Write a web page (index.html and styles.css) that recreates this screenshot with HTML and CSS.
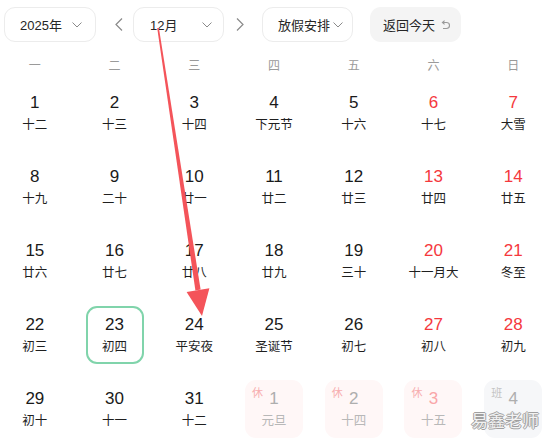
FILE: index.html
```html
<!DOCTYPE html>
<html lang="zh-CN">
<head>
<meta charset="utf-8">
<link rel="stylesheet" href="styles.css">
</head>
<body>
<div class="page">
  <div class="toolbar">
    <div class="select sel-year"><span>2025年</span><svg class="chev" width="10" height="6" viewBox="0 0 10 6"><path d="M0.5 0.5 L5 5 L9.5 0.5" fill="none" stroke="#8a8a8a" stroke-width="1"/></svg></div>
    <div class="nav nav-prev"><svg width="8" height="13" viewBox="0 0 8 13"><path d="M7 0.5 L1 6.5 L7 12.5" fill="none" stroke="#8a8a8a" stroke-width="1.2"/></svg></div>
    <div class="select sel-month"><span>12月</span><svg class="chev" width="10" height="6" viewBox="0 0 10 6"><path d="M0.5 0.5 L5 5 L9.5 0.5" fill="none" stroke="#8a8a8a" stroke-width="1"/></svg></div>
    <div class="nav nav-next"><svg width="8" height="13" viewBox="0 0 8 13"><path d="M1 0.5 L7 6.5 L1 12.5" fill="none" stroke="#8a8a8a" stroke-width="1.2"/></svg></div>
    <div class="select sel-holiday"><span>放假安排</span><svg class="chev" width="10" height="6" viewBox="0 0 10 6"><path d="M0.5 0.5 L5 5 L9.5 0.5" fill="none" stroke="#8a8a8a" stroke-width="1"/></svg></div>
    <div class="today-btn"><span>返回今天</span><svg class="undo" width="9" height="10" viewBox="0 0 9 10"><path d="M2 2.5 H5.5 A3 3 0 0 1 5.5 8.5 H2" fill="none" stroke="#9a9a9a" stroke-width="1.1"/><path d="M3.6 0.6 L1.4 2.5 L3.6 4.4" fill="none" stroke="#9a9a9a" stroke-width="1.1"/></svg></div>
  </div>

  <div class="calendar">
    <div class="week">
      <div>一</div><div>二</div><div>三</div><div>四</div><div>五</div><div>六</div><div>日</div>
    </div>
    <div class="grid">
      <div class="cell"><div class="day"><div class="num">1</div><div class="lunar">十二</div></div></div>
      <div class="cell"><div class="day"><div class="num">2</div><div class="lunar">十三</div></div></div>
      <div class="cell"><div class="day"><div class="num">3</div><div class="lunar">十四</div></div></div>
      <div class="cell"><div class="day"><div class="num">4</div><div class="lunar">下元节</div></div></div>
      <div class="cell"><div class="day"><div class="num">5</div><div class="lunar">十六</div></div></div>
      <div class="cell"><div class="day weekend"><div class="num">6</div><div class="lunar">十七</div></div></div>
      <div class="cell"><div class="day weekend"><div class="num">7</div><div class="lunar">大雪</div></div></div>

      <div class="cell"><div class="day"><div class="num">8</div><div class="lunar">十九</div></div></div>
      <div class="cell"><div class="day"><div class="num">9</div><div class="lunar">二十</div></div></div>
      <div class="cell"><div class="day"><div class="num">10</div><div class="lunar">廿一</div></div></div>
      <div class="cell"><div class="day"><div class="num">11</div><div class="lunar">廿二</div></div></div>
      <div class="cell"><div class="day"><div class="num">12</div><div class="lunar">廿三</div></div></div>
      <div class="cell"><div class="day weekend"><div class="num">13</div><div class="lunar">廿四</div></div></div>
      <div class="cell"><div class="day weekend"><div class="num">14</div><div class="lunar">廿五</div></div></div>

      <div class="cell"><div class="day"><div class="num">15</div><div class="lunar">廿六</div></div></div>
      <div class="cell"><div class="day"><div class="num">16</div><div class="lunar">廿七</div></div></div>
      <div class="cell"><div class="day"><div class="num">17</div><div class="lunar">廿八</div></div></div>
      <div class="cell"><div class="day"><div class="num">18</div><div class="lunar">廿九</div></div></div>
      <div class="cell"><div class="day"><div class="num">19</div><div class="lunar">三十</div></div></div>
      <div class="cell"><div class="day weekend"><div class="num">20</div><div class="lunar">十一月大</div></div></div>
      <div class="cell"><div class="day weekend"><div class="num">21</div><div class="lunar">冬至</div></div></div>

      <div class="cell"><div class="day"><div class="num">22</div><div class="lunar">初三</div></div></div>
      <div class="cell"><div class="day selected"><div class="num">23</div><div class="lunar">初四</div></div></div>
      <div class="cell"><div class="day"><div class="num">24</div><div class="lunar">平安夜</div></div></div>
      <div class="cell"><div class="day"><div class="num">25</div><div class="lunar">圣诞节</div></div></div>
      <div class="cell"><div class="day"><div class="num">26</div><div class="lunar">初七</div></div></div>
      <div class="cell"><div class="day weekend"><div class="num">27</div><div class="lunar">初八</div></div></div>
      <div class="cell"><div class="day weekend"><div class="num">28</div><div class="lunar">初九</div></div></div>

      <div class="cell"><div class="day"><div class="num">29</div><div class="lunar">初十</div></div></div>
      <div class="cell"><div class="day"><div class="num">30</div><div class="lunar">十一</div></div></div>
      <div class="cell"><div class="day"><div class="num">31</div><div class="lunar">十二</div></div></div>
      <div class="cell"><div class="day other rest"><span class="tag">休</span><div class="num">1</div><div class="lunar">元旦</div></div></div>
      <div class="cell"><div class="day other rest"><span class="tag">休</span><div class="num">2</div><div class="lunar">十四</div></div></div>
      <div class="cell"><div class="day other rest red"><span class="tag">休</span><div class="num">3</div><div class="lunar">十五</div></div></div>
      <div class="cell"><div class="day other work"><span class="tag">班</span><div class="num">4</div><div class="lunar lunar-empty"></div></div></div>
    </div>
  </div>

  <div class="watermark">易鑫老师</div>

  <svg class="arrow" width="547" height="441" viewBox="0 0 547 441">
    <polygon points="157.2,28.1 158.9,27.9 200.6,289.6 195.4,290.4" fill="#f4545a"/>
    <polygon points="186.6,291.9 209.4,288.2 202,316" fill="#f4545a"/>
  </svg>
</div>
</body>
</html>
```

FILE: styles.css
```css
* { box-sizing: border-box; }

html, body {
  margin: 0;
  padding: 0;
  background: #ffffff;
  overflow: hidden;
}

body {
  font-family: "Liberation Sans", "Noto Sans CJK SC", sans-serif;
  color: #1f1f1f;
}

.page {
  position: relative;
  width: 547px;
  height: 441px;
}

.toolbar {
  display: flex;
  align-items: center;
  padding: 7px 0 0 4px;
  height: 42px;
}

.select {
  width: 92px;
  height: 35px;
  border: 1px solid #ececec;
  border-radius: 11px;
  display: flex;
  align-items: center;
  justify-content: space-between;
  font-size: 13px;
  color: #262626;
}

.sel-year { padding: 0 13px 0 15px; }
.sel-month { width: 91px; padding: 0 11px 0 16px; }
.sel-holiday { width: 91px; padding: 0 9px 0 15px; }

.chev { display: block; margin-top: 1px; }

.nav {
  height: 35px;
  display: flex;
  align-items: center;
  justify-content: center;
}
.nav svg { display: block; }
.nav-prev { width: 37px; padding-left: 9px; }
.nav-next { width: 38px; padding-right: 7px; }

.today-btn {
  margin-left: 17px;
  width: 91px;
  height: 35px;
  border-radius: 11px;
  background: #f4f4f4;
  display: flex;
  align-items: center;
  padding-left: 13px;
  font-size: 13px;
  color: #262626;
  gap: 6px;
}
.undo { display: block; }

.calendar {
  margin-left: -5px;
  width: 558px;
}

.week {
  display: grid;
  grid-template-columns: repeat(7, 1fr);
  margin-top: 12px;
  height: 22px;
  line-height: 22px;
  font-family: "Noto Sans CJK SC", sans-serif;
  font-size: 12px;
  color: #9a9a9a;
  text-align: center;
}

.grid {
  display: grid;
  grid-template-columns: repeat(7, 1fr);
  grid-auto-rows: 74px;
}

.cell {
  display: flex;
  align-items: center;
  justify-content: center;
}

.day {
  position: relative;
  width: 58px;
  height: 58px;
  border-radius: 11px;
  border: 2px solid transparent;
  display: flex;
  flex-direction: column;
  align-items: center;
  justify-content: center;
}

.num {
  font-size: 17px;
  line-height: 21px;
  color: #1a1a1a;
}

.lunar {
  font-family: "Noto Sans CJK SC", sans-serif;
  font-size: 12.5px;
  line-height: 21px;
  color: #1f1f1f;
  white-space: nowrap;
}
.lunar-empty { height: 21px; }

.weekend .num { color: #f5383d; }

.selected { border-color: #80d4ab; }

.other .num { color: #aeaeae; }
.other .lunar { color: #b8b8b8; }
.rest { background: #fff7f7; }
.rest.red .num { color: #f9a6a8; }
.work { background: #f6f7f9; }

.tag {
  position: absolute;
  left: 5px;
  top: 3px;
  font-family: "Noto Sans CJK SC", sans-serif;
  font-size: 11px;
  line-height: 14px;
}
.rest .tag { color: #f7aeb0; }
.work .tag { color: #c4c4c4; }

.watermark {
  position: absolute;
  left: 471px;
  top: 409px;
  font-family: "Noto Sans CJK SC", sans-serif;
  font-size: 17px;
  line-height: 22px;
  color: #f2f2f2;
  text-shadow: 1px 0 0 #a0a0a0, -1px 0 0 #a0a0a0, 0 1px 0 #a0a0a0, 0 -1px 0 #a0a0a0;
}

.arrow {
  position: absolute;
  left: 0;
  top: 0;
  pointer-events: none;
}
```
